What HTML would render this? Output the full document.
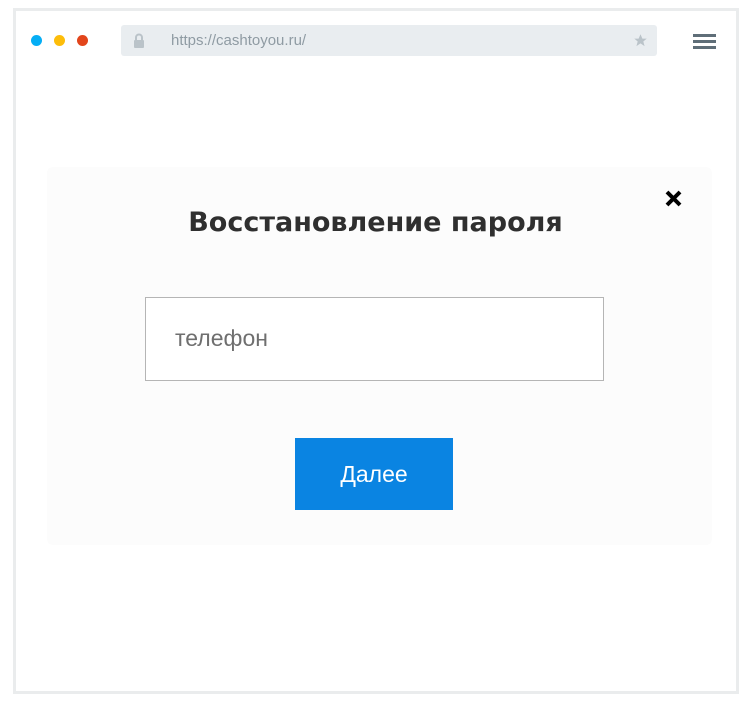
<!DOCTYPE html>
<html><head><meta charset="utf-8"><style>
*{margin:0;padding:0;box-sizing:border-box}
body{width:751px;height:709px;background:#fff;position:relative;font-family:"Liberation Sans","DejaVu Sans",sans-serif;overflow:hidden}
.frame{position:absolute;left:13px;top:8px;width:726px;height:686px;border:3px solid #eaeced;background:#fff}
.dot{position:absolute;top:35px;width:11px;height:11px;border-radius:50%}
.url{position:absolute;left:121px;top:25px;width:536px;height:31px;background:#e9edf0;border-radius:3px}
.url span{position:absolute;left:50px;top:7px;font-size:15px;color:#8f9ba3}
.ham{position:absolute;left:693px;width:23px;height:3px;background:#5f6e78}
.modal{position:absolute;left:47px;top:167px;width:665px;height:378px;background:#fcfcfc;border-radius:6px}
h1{position:absolute;left:0;width:751px;top:207px;text-align:center;font-weight:bold;color:#2f2f2f;font-family:"DejaVu Sans","Liberation Sans",sans-serif;letter-spacing:0px;font-size:27px}
.inp{position:absolute;left:145px;top:297px;width:459px;height:84px;border:1px solid #b5b5b5;background:#fff}
.inp span{position:absolute;left:29px;top:27px;font-size:23px;color:#6f6f6f}
.btn{position:absolute;left:295px;top:438px;width:158px;height:72px;background:#0a84e2;color:#fff;font-size:23px;text-align:center;line-height:72px}
</style></head><body>
<div class="frame"></div>
<div class="dot" style="left:31px;background:#05aef5"></div>
<div class="dot" style="left:54px;background:#fdbd0a"></div>
<div class="dot" style="left:77px;background:#e2451b"></div>
<div class="url"><svg style="position:absolute;left:12px;top:8px" width="12" height="15" viewBox="0 0 12 15"><path d="M3 7V4.5a3 3 0 0 1 6 0V7" fill="none" stroke="#bac3c9" stroke-width="2"/><rect x="1" y="7" width="10" height="8" rx="1" fill="#bac3c9"/></svg><span>https://cashtoyou.ru/</span>
<svg style="position:absolute;left:512px;top:8px" width="15" height="15" viewBox="0 0 24 24"><path d="M12 2l3 7h7l-5.5 4.5 2 7.5L12 16.5 5.5 21l2-7.5L2 9h7z" fill="#bac3c9"/></svg></div>
<div class="ham" style="top:34px"></div><div class="ham" style="top:40px"></div><div class="ham" style="top:46px"></div>
<div class="modal"></div>
<svg style="position:absolute;left:664px;top:189px" width="19" height="19" viewBox="0 0 19 19"><path d="M3 3L16 16M16 3L3 16" stroke="#000" stroke-width="4"/></svg>
<h1>Восстановление пароля</h1>
<div class="inp"><span>телефон</span></div>
<div class="btn">Далее</div>
</body></html>
